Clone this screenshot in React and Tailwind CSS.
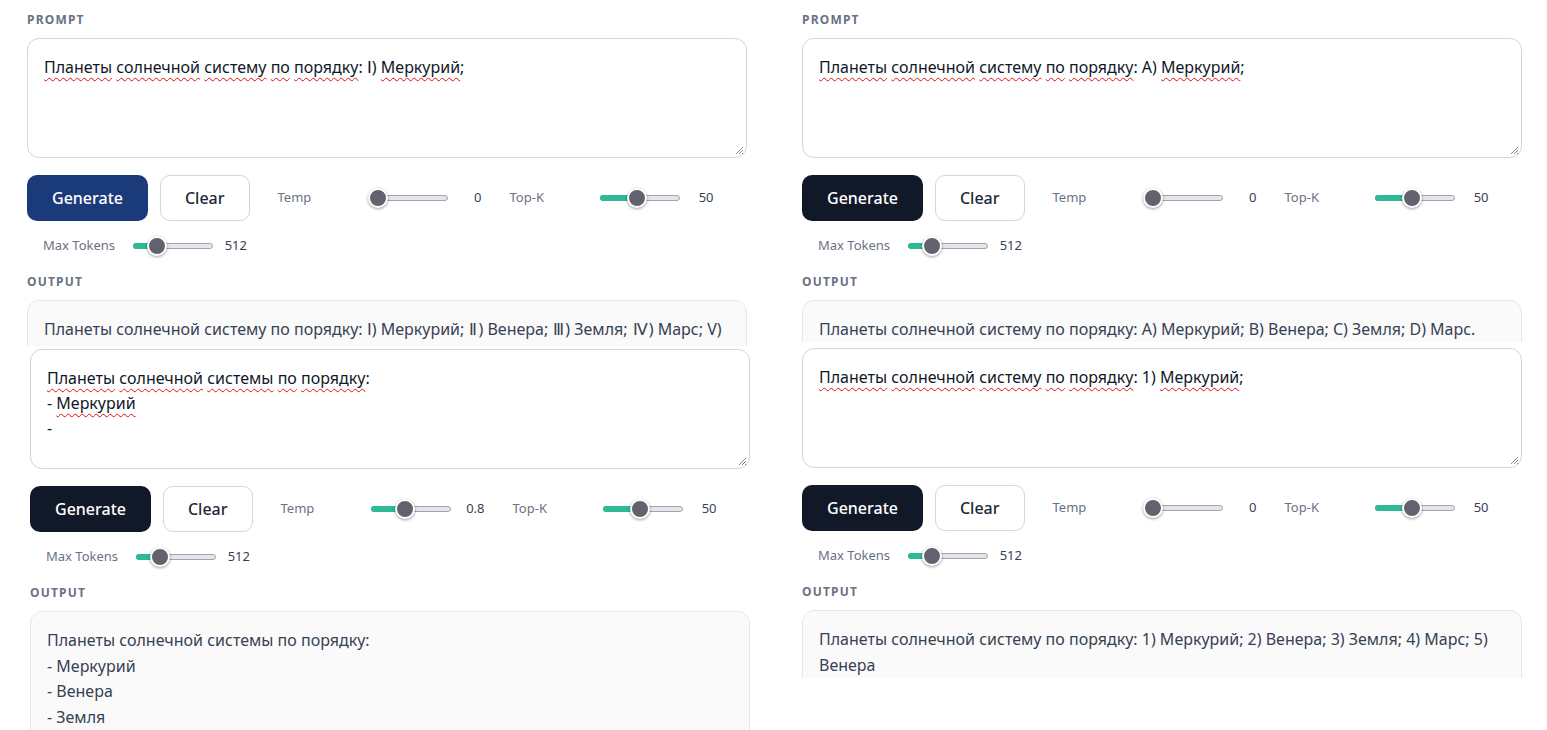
import React from 'react';

// spellcheck-style red squiggle under a word
const W = ({ children }) => (
  <span className="underline decoration-wavy decoration-[#e01010] decoration-1 underline-offset-[4px]">{children}</span>
);

// roman numeral glyph, spaced a touch wider
const R = ({ children }) => <span className="px-[1px]">{children}</span>;

const Grip = () => (
  <svg className="absolute bottom-[2px] right-[2px]" width="10" height="10" viewBox="0 0 10 10">
    <path d="M9 2L2 9M9 5L5 9M9 8L8 9" stroke="#8a8a8a" strokeWidth="1" />
  </svg>
);

function Slider({ pct }) {
  const left = Math.round(pct * 60);
  return (
    <div className="relative h-5 w-20">
      <div className="absolute left-0 right-0 top-[7px] h-[6px] rounded-full border border-[#a3a3ad] bg-[#e6e6ea]" />
      {pct > 0 && (
        <div className="absolute left-0 top-[7px] h-[6px] rounded-full bg-[#2fb996]" style={{ width: left + 10 }} />
      )}
      <div
        className="absolute top-0 h-5 w-5 rounded-full border-2 border-white bg-[#62626f] shadow-[0_1px_3px_rgba(0,0,0,0.4)]"
        style={{ left }}
      />
    </div>
  );
}

function Control({ label, value, pct }) {
  return (
    <div className="flex h-[26px] items-center gap-[10px] pl-4">
      <span className="w-20 text-[13px] text-gray-500">{label}</span>
      <Slider pct={pct} />
      <span className="w-6 text-right text-[13px] text-gray-700">{value}</span>
    </div>
  );
}

function Panel({ showLabel, prompt, output, temp, tempPct, generate }) {
  return (
    <div className="w-[720px]">
      {showLabel && (
        <div className="mb-[10px] text-xs font-bold uppercase leading-4 tracking-widest text-gray-500">Prompt</div>
      )}
      <div className="relative h-[120px] rounded-xl border border-gray-300 bg-white p-4 text-base leading-[25px] text-gray-900">
        {prompt}
        <Grip />
      </div>
      <div className="mt-[17px] flex flex-wrap items-center gap-3">
        <button className={`rounded-[10px] border border-transparent px-6 py-[10px] text-base font-medium leading-6 text-white ${generate}`}>
          Generate
        </button>
        <button className="rounded-[10px] border border-gray-300 bg-white px-6 py-[10px] text-base font-medium leading-6 text-gray-800">
          Clear
        </button>
        <Control label="Temp" value={temp} pct={tempPct} />
        <Control label="Top-K" value="50" pct={0.455} />
        <Control label="Max Tokens" value="512" pct={0.233} />
      </div>
      <div className="mb-[10px] mt-[15px] text-xs font-bold uppercase leading-4 tracking-widest text-gray-500">Output</div>
      <div className="whitespace-pre-line rounded-xl border border-gray-200 bg-[#fafafa] p-4 text-base leading-[25.5px] text-gray-700">
        {output}
      </div>
    </div>
  );
}

export default function App() {
  return (
    <div className="flex h-[730px] w-[1547px] overflow-hidden bg-white font-['Noto_Sans',sans-serif]">
      <div className="w-[775px]">
        <div className="h-[346px] overflow-hidden pl-[27px] pt-[12px]">
          <Panel
            showLabel
            generate="bg-[#1b3a7a]"
            temp="0"
            tempPct={0}
            prompt={<><W>Планеты</W> <W>солнечной</W> <W>систему</W> <W>по</W> <W>порядку</W>: Ⅰ) <W>Меркурий</W>;</>}
            output={<>Планеты солнечной систему по порядку: Ⅰ) Меркурий; <R>Ⅱ</R>) Венера; <R>Ⅲ</R>) Земля; <R>Ⅳ</R>) Марс; V)</>}
          />
        </div>
        <div className="h-[384px] overflow-hidden pl-[30px] pt-[3px]">
          <Panel
            generate="bg-[#111827]"
            temp="0.8"
            tempPct={0.4}
            prompt={<><W>Планеты</W> <W>солнечной</W> <W>системы</W> <W>по</W> <W>порядку</W>:<br />- <W>Меркурий</W><br />-</>}
            output={"Планеты солнечной системы по порядку:\n- Меркурий\n- Венера\n- Земля"}
          />
        </div>
      </div>
      <div className="w-[772px] pl-[27px]">
        <div className="h-[342px] overflow-hidden pt-[12px]">
          <Panel
            showLabel
            generate="bg-[#111827]"
            temp="0"
            tempPct={0}
            prompt={<><W>Планеты</W> <W>солнечной</W> <W>систему</W> <W>по</W> <W>порядку</W>: A) <W>Меркурий</W>;</>}
            output="Планеты солнечной систему по порядку: A) Меркурий; B) Венера; C) Земля; D) Марс."
          />
        </div>
        <div className="mt-[6px] h-[330px] overflow-hidden">
          <Panel
            generate="bg-[#111827]"
            temp="0"
            tempPct={0}
            prompt={<><W>Планеты</W> <W>солнечной</W> <W>систему</W> <W>по</W> <W>порядку</W>: 1) <W>Меркурий</W>;</>}
            output="Планеты солнечной систему по порядку: 1) Меркурий; 2) Венера; 3) Земля; 4) Марс; 5) Венера"
          />
        </div>
      </div>
    </div>
  );
}
